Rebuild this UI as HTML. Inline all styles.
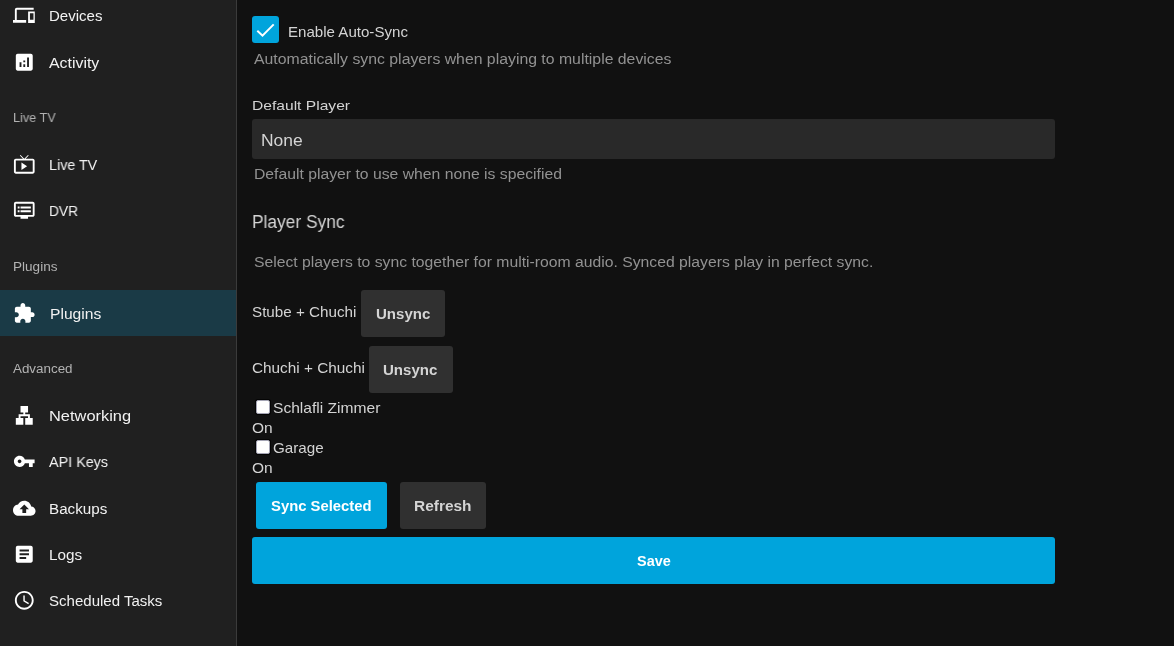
<!DOCTYPE html>
<html><head><meta charset="utf-8">
<style>
html,body{margin:0;padding:0;width:1174px;height:646px;overflow:hidden;background:#111111;font-family:"Liberation Sans",sans-serif;}
.side{position:absolute;left:0;top:0;width:236px;height:646px;background:#202020;border-right:1px solid #3b3b3b;}
.sel{position:absolute;left:0;top:290px;width:236px;height:46px;background:#1a3a46;}
.t{position:absolute;line-height:1;white-space:nowrap;transform-origin:0 0;will-change:transform;}
.ic{position:absolute;left:13px;width:22.56px;height:22.56px;fill:#ffffff;}
.box{position:absolute;border-radius:3px;}
.cb{position:absolute;left:256px;width:14px;height:14px;background:#fff;border:1px solid #a4a4b4;border-radius:2px;box-sizing:border-box;box-shadow:0 0 0 1px #050505;}
</style></head><body>
<div class="side"></div>
<div class="sel"></div>
<svg class="ic" style="top:3.60px" viewBox="0 0 24 24"><path fill-rule="evenodd" d="M4 6h18V4H4c-1.1 0-2 .9-2 2v11H0v3h14v-3H4V6z M16.1 8h7.1v12.1h-7.1z M18 9.9v6.9h3.8V9.9z"/></svg>
<svg class="ic" style="top:51.15px" viewBox="0 0 24 24"><path fill-rule="evenodd" d="M19 3H5c-1.1 0-2 .9-2 2v14c0 1.1.9 2 2 2h14c1.1 0 2-.9 2-2V5c0-1.1-.9-2-2-2zM9 17H7v-5h2v5zm4 0h-2v-3h2v3zm0-5h-2v-2h2v2zm4 5h-2V7h2v10z"/></svg>
<svg class="ic" style="top:152.60px" viewBox="0 0 24 24"><path fill-rule="evenodd" d="M21 6h-7.59l3.29-3.29L16 2l-4 4-4-4-.71.71L10.59 6H3c-1.1 0-2 .89-2 2v12c0 1.1.9 2 2 2h18c1.1 0 2-.9 2-2V8c0-1.11-.9-2-2-2zm0 14H3V8h18v12zM9 10v8l6-4z"/></svg>
<svg class="ic" style="top:198.60px" viewBox="0 0 24 24"><path fill-rule="evenodd" d="M21 3H3c-1.1 0-2 .9-2 2v12c0 1.1.9 2 2 2h5v2h8v-2h5c1.1 0 1.99-.9 1.99-2L23 5c0-1.1-.9-2-2-2zm0 14H3V5h18v12zm-2-9H8v2h11V8zm0 4H8v2h11v-2zM7 8H5v2h2V8zm0 4H5v2h2v-2z"/></svg>
<svg class="ic" style="top:301.60px" viewBox="0 0 24 24"><path fill-rule="evenodd" d="M20.5 11H19V7c0-1.1-.9-2-2-2h-4V3.5C13 2.12 11.88 1 10.5 1S8 2.12 8 3.5V5H4c-1.1 0-1.99.9-1.99 2v3.8H3.5c1.49 0 2.7 1.21 2.7 2.7s-1.21 2.7-2.7 2.7H2V20c0 1.1.9 2 2 2h3.8v-1.5c0-1.49 1.21-2.7 2.7-2.7 1.49 0 2.7 1.21 2.7 2.7V22H17c1.1 0 2-.9 2-2v-4h1.5c1.38 0 2.5-1.12 2.5-2.5S21.88 11 20.5 11z"/></svg>
<svg class="ic" style="top:403.90px" viewBox="0 0 24 24"><path fill-rule="evenodd" d="M13 22h8v-7h-3v-4h-5V9h3V2H8v7h3v2H6v4H3v7h8v-7H8v-2h8v2h-3z"/></svg>
<svg class="ic" style="top:449.90px" viewBox="0 0 24 24"><path fill-rule="evenodd" d="M12.65 10C11.83 7.67 9.61 6 7 6c-3.31 0-6 2.69-6 6s2.69 6 6 6c2.61 0 4.83-1.67 5.65-4H17v4h4v-4h2v-4H12.65zM7 14c-1.1 0-2-.9-2-2s.9-2 2-2 2 .9 2 2-.9 2-2 2z"/></svg>
<svg class="ic" style="top:496.50px" viewBox="0 0 24 24"><path fill-rule="evenodd" d="M19.35 10.04C18.67 6.59 15.64 4 12 4 9.11 4 6.6 5.64 5.35 8.04 2.34 8.36 0 10.91 0 14c0 3.31 2.69 6 6 6h13c2.76 0 5-2.24 5-5 0-2.64-2.05-4.78-4.65-4.96zM14 13v4h-4v-4H7l5-5 5 5h-3z"/></svg>
<svg class="ic" style="top:542.60px" viewBox="0 0 24 24"><path fill-rule="evenodd" d="M19 3H5c-1.1 0-2 .9-2 2v14c0 1.1.9 2 2 2h14c1.1 0 2-.9 2-2V5c0-1.1-.9-2-2-2zm-5 14H7v-2h7v2zm3-4H7v-2h10v2zm0-4H7V7h10v2z"/></svg>
<svg class="ic" style="top:588.80px" viewBox="0 0 24 24"><path fill-rule="evenodd" d="M11.99 2C6.47 2 2 6.48 2 12s4.47 10 9.99 10C17.52 22 22 17.52 22 12S17.52 2 11.99 2zM12 20c-4.42 0-8-3.58-8-8s3.58-8 8-8 8 3.58 8 8-3.58 8-8 8zm.5-13H11v6l5.25 3.15.75-1.23-4.5-2.67z"/></svg>
<div class="box" style="left:252px;top:16px;width:27px;height:27px;background:#00a4dc;"></div>
<svg style="position:absolute;left:252px;top:16px;width:27px;height:27px" viewBox="0 0 27 27"><path d="M5.3 14.8 L10.5 19.7 L21.7 8.4" fill="none" stroke="#fff" stroke-width="2"/></svg>
<div class="box" style="left:252px;top:119px;width:803px;height:40px;background:#292929;"></div>
<div class="box" style="left:361px;top:290px;width:84px;height:47px;background:#303030;"></div>
<div class="box" style="left:369px;top:346px;width:84px;height:47px;background:#303030;"></div>
<div class="cb" style="top:400px"></div>
<div class="cb" style="top:440px"></div>
<div class="box" style="left:256px;top:482px;width:131px;height:47px;background:#00a4dc;"></div>
<div class="box" style="left:400px;top:482px;width:86px;height:47px;background:#303030;"></div>
<div class="box" style="left:252px;top:537px;width:803px;height:47px;background:#00a4dc;"></div>
<div class="t" style="left:48.62px;top:8.60px;font-size:14.649px;font-weight:400;color:#f2f2f2;transform:scaleX(1.0278);">Devices</div>
<div class="t" style="left:48.90px;top:55.60px;font-size:14.649px;font-weight:400;color:#f2f2f2;transform:scaleX(1.0864);">Activity</div>
<div class="t" style="left:12.51px;top:110.82px;font-size:13.084px;font-weight:400;color:#b3b3b3;transform:scaleX(0.9654);">Live TV</div>
<div class="t" style="left:48.58px;top:157.70px;font-size:14.649px;font-weight:400;color:#f2f2f2;transform:scaleX(0.9776);">Live TV</div>
<div class="t" style="left:48.62px;top:203.80px;font-size:14.649px;font-weight:400;color:#f2f2f2;transform:scaleX(0.9427);">DVR</div>
<div class="t" style="left:13.34px;top:260.12px;font-size:13.084px;font-weight:400;color:#b3b3b3;transform:scaleX(1.0366);">Plugins</div>
<div class="t" style="left:49.58px;top:306.50px;font-size:14.649px;font-weight:400;color:#f2f2f2;transform:scaleX(1.0680);">Plugins</div>
<div class="t" style="left:13.20px;top:362.02px;font-size:13.084px;font-weight:400;color:#b3b3b3;transform:scaleX(1.0233);">Advanced</div>
<div class="t" style="left:49.12px;top:408.80px;font-size:14.649px;font-weight:400;color:#f2f2f2;transform:scaleX(1.1219);">Networking</div>
<div class="t" style="left:49.20px;top:454.90px;font-size:14.649px;font-weight:400;color:#f2f2f2;transform:scaleX(0.9818);">API Keys</div>
<div class="t" style="left:49.11px;top:501.60px;font-size:14.649px;font-weight:400;color:#f2f2f2;transform:scaleX(1.0388);">Backups</div>
<div class="t" style="left:49.10px;top:547.90px;font-size:14.649px;font-weight:400;color:#f2f2f2;transform:scaleX(1.0443);">Logs</div>
<div class="t" style="left:49.13px;top:594.00px;font-size:14.649px;font-weight:400;color:#f2f2f2;transform:scaleX(1.0279);">Scheduled Tasks</div>
<div class="t" style="left:287.62px;top:24.72px;font-size:14.507px;font-weight:400;color:#d4d4d4;transform:scaleX(1.0404);">Enable Auto-Sync</div>
<div class="t" style="left:253.90px;top:51.78px;font-size:14.080px;font-weight:400;color:#929292;transform:scaleX(1.1231);">Automatically sync players when playing to multiple devices</div>
<div class="t" style="left:252.38px;top:99.34px;font-size:13.653px;font-weight:400;color:#d4d4d4;transform:scaleX(1.1439);">Default Player</div>
<div class="t" style="left:261.33px;top:132.23px;font-size:16.213px;font-weight:400;color:#d4d4d4;transform:scaleX(1.0777);">None</div>
<div class="t" style="left:254.17px;top:166.58px;font-size:14.080px;font-weight:400;color:#929292;transform:scaleX(1.1180);">Default player to use when none is specified</div>
<div class="t" style="left:251.84px;top:212.51px;font-size:18.062px;font-weight:400;color:#d4d4d4;transform:scaleX(0.9612);">Player Sync</div>
<div class="t" style="left:253.91px;top:255.08px;font-size:14.080px;font-weight:400;color:#929292;transform:scaleX(1.1178);">Select players to sync together for multi-room audio. Synced players play in perfect sync.</div>
<div class="t" style="left:251.92px;top:304.72px;font-size:14.507px;font-weight:400;color:#d4d4d4;transform:scaleX(1.0490);">Stube + Chuchi</div>
<div class="t" style="left:375.69px;top:306.64px;font-size:14.364px;font-weight:700;color:#d4d4d4;transform:scaleX(1.0480);">Unsync</div>
<div class="t" style="left:251.88px;top:360.62px;font-size:14.507px;font-weight:400;color:#d4d4d4;transform:scaleX(1.0569);">Chuchi + Chuchi</div>
<div class="t" style="left:383.29px;top:362.74px;font-size:14.364px;font-weight:700;color:#d4d4d4;transform:scaleX(1.0480);">Unsync</div>
<div class="t" style="left:273.11px;top:400.84px;font-size:14.364px;font-weight:400;color:#d4d4d4;transform:scaleX(1.0859);">Schlafli Zimmer</div>
<div class="t" style="left:252.17px;top:421.04px;font-size:14.364px;font-weight:400;color:#d4d4d4;transform:scaleX(1.0802);">On</div>
<div class="t" style="left:272.89px;top:440.94px;font-size:14.364px;font-weight:400;color:#d4d4d4;transform:scaleX(1.0588);">Garage</div>
<div class="t" style="left:252.17px;top:460.64px;font-size:14.364px;font-weight:400;color:#d4d4d4;transform:scaleX(1.0802);">On</div>
<div class="t" style="left:271.47px;top:498.52px;font-size:14.507px;font-weight:700;color:#ffffff;transform:scaleX(1.0224);">Sync Selected</div>
<div class="t" style="left:414.23px;top:498.96px;font-size:14.222px;font-weight:700;color:#d4d4d4;transform:scaleX(1.0860);">Refresh</div>
<div class="t" style="left:636.77px;top:554.90px;font-size:13.938px;font-weight:700;color:#ffffff;transform:scaleX(1.0380);">Save</div>
</body></html>
